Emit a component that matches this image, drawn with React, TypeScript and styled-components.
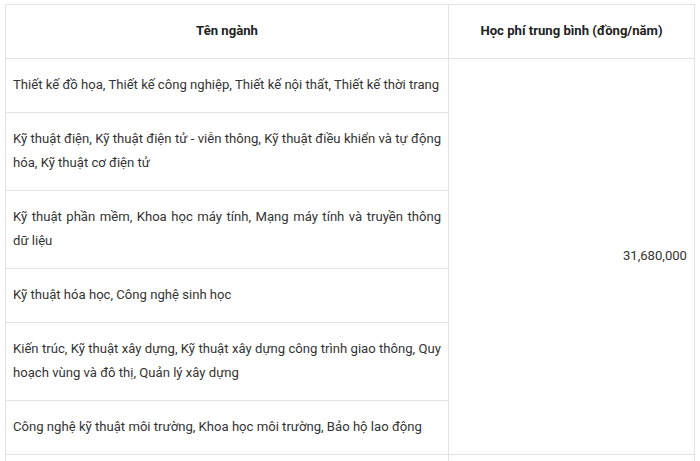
import React, {FC} from 'react';
import styled, {createGlobalStyle} from 'styled-components';

const GlobalStyle = createGlobalStyle`
  html, body {
    margin: 0;
    padding: 0;
    background: #fff;
  }
  body {
    font-family: Roboto, "Liberation Sans", Arial, sans-serif;
  }
`;

const Wrapper = styled.div`
  padding: 4px 7px 0 5px;
  height: 461px;
  overflow: hidden;
  box-sizing: border-box;
`;

const Table = styled.table`
  width: 689px;
  border-collapse: collapse;
  table-layout: fixed;
  font-size: 13.12px;
  line-height: 24px;
  color: #333;
`;

const Col = styled.col<{$width: number}>`
  width: ${(p) => p.$width}px;
`;

const HeadCell = styled.th`
  border: 1px solid #e3e3e3;
  padding: 14px 8px 15px;
  font-weight: 700;
  color: #222;
  text-align: center;
  vertical-align: middle;
`;

const NameCell = styled.td`
  border: 1px solid #e3e3e3;
  padding: 14px 7px 15px;
  text-align: justify;
  vertical-align: middle;
`;

const FeeCell = styled.td`
  border: 1px solid #e3e3e3;
  padding: 14px 7px 15px;
  text-align: right;
  vertical-align: middle;
`;

const rows: string[] = [
  'Thiết kế đồ họa, Thiết kế công nghiệp, Thiết kế nội thất, Thiết kế thời trang',
  'Kỹ thuật điện, Kỹ thuật điện tử - viễn thông, Kỹ thuật điều khiển và tự động hóa, Kỹ thuật cơ điện tử',
  'Kỹ thuật phần mềm, Khoa học máy tính, Mạng máy tính và truyền thông dữ liệu',
  'Kỹ thuật hóa học, Công nghệ sinh học',
  'Kiến trúc, Kỹ thuật xây dựng, Kỹ thuật xây dựng công trình giao thông, Quy hoạch vùng và đô thị, Quản lý xây dựng',
  'Công nghệ kỹ thuật môi trường, Khoa học môi trường, Bảo hộ lao động',
];

const App: FC = () => {
  return (
    <Wrapper>
      <GlobalStyle />
      <Table>
        <colgroup>
          <Col $width={443} />
          <Col $width={246} />
        </colgroup>
        <thead>
          <tr>
            <HeadCell>Tên ngành</HeadCell>
            <HeadCell>Học phí trung bình (đồng/năm)</HeadCell>
          </tr>
        </thead>
        <tbody>
          {rows.map((name, i) => (
            <tr key={i}>
              <NameCell>{name}</NameCell>
              {i === 0 && <FeeCell rowSpan={rows.length}>31,680,000</FeeCell>}
            </tr>
          ))}
          {/* next row is cut off by the window */}
          <tr>
            <NameCell>&nbsp;</NameCell>
            <FeeCell>&nbsp;</FeeCell>
          </tr>
        </tbody>
      </Table>
    </Wrapper>
  );
};

export default App;
